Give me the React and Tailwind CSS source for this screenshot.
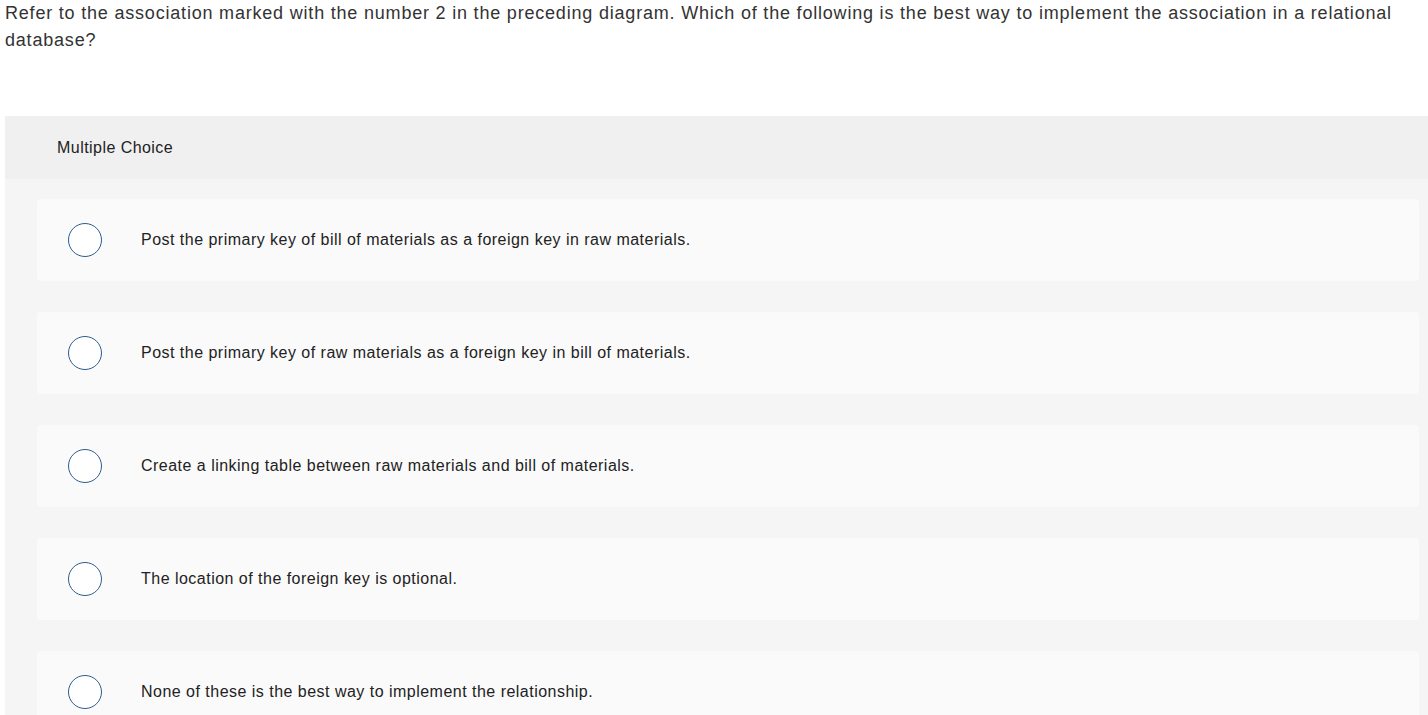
import React from 'react';

const options = [
  'Post the primary key of bill of materials as a foreign key in raw materials.',
  'Post the primary key of raw materials as a foreign key in bill of materials.',
  'Create a linking table between raw materials and bill of materials.',
  'The location of the foreign key is optional.',
  'None of these is the best way to implement the relationship.',
];

const Radio = () => (
  <span className="block w-[34px] h-[34px] shrink-0 rounded-full border-[1.5px] border-[#2c5d8c] bg-white"></span>
);

export default function App() {
  return (
    <div className="w-[1428px] h-[715px] overflow-hidden bg-white text-[#333] font-['Liberation_Sans',Arial,sans-serif]">
      <p className="pl-[5px] max-w-[1410px] text-[18px] leading-[27px] tracking-[0.8px] text-[#333]">
        Refer to the association marked with the number 2 in the preceding diagram. Which of the following is the best way to implement the association in a relational database?
      </p>

      <div className="ml-[5px] mt-[62px] pb-[40px] bg-[#f5f5f5]">
        <div className="h-[63px] bg-[#f0f0f0] pl-[52px] flex items-center text-[16px] tracking-[0.45px] text-[#222]">
          Multiple Choice
        </div>
        <div className="pl-[32px] pr-[9px] pt-[20px] flex flex-col gap-[31px]">
          {options.map((text) => (
            <div key={text} className="h-[82px] rounded bg-[#fafafa] flex items-center pl-[31px]">
              <Radio />
              <span className="ml-[39px] text-[16px] tracking-[0.48px] text-[#222]">{text}</span>
            </div>
          ))}
        </div>
      </div>
    </div>
  );
}
